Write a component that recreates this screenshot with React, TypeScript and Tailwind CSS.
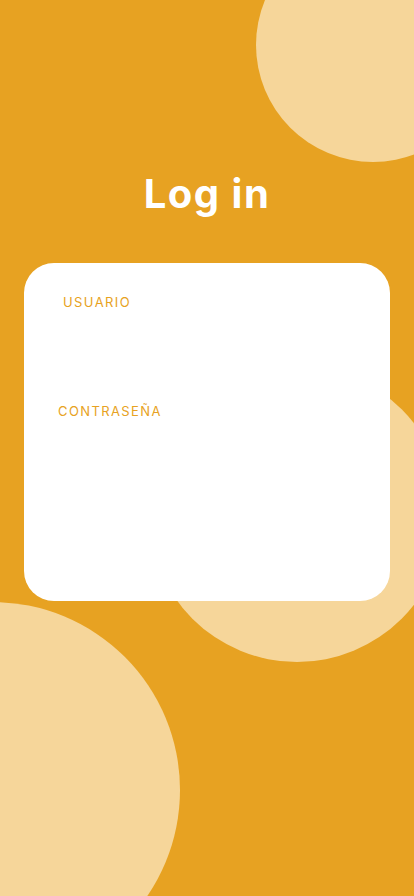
import React from "react";

function Field({ label, className }: { label: string; className: string }) {
  return (
    <div className={className}>
      <label className="block text-[13px] leading-[16px] tracking-[1.4px] text-[#E7A222] font-['Inter',sans-serif]">
        {label}
      </label>
      <input className="mt-2 w-full h-[40px] bg-transparent outline-none" type="text" />
    </div>
  );
}

export default function App() {
  return (
    <div className="relative w-[414px] h-[896px] overflow-hidden bg-[#E7A222] font-['Inter',sans-serif]">
      {/* background bubbles */}
      <div className="absolute left-[256px] top-[-72px] w-[234px] h-[234px] rounded-full bg-[#F6D69A]"></div>
      <div className="absolute left-[149px] top-[366px] w-[296px] h-[296px] rounded-full bg-[#F6D69A]"></div>
      <div className="absolute left-[-196px] top-[602px] w-[376px] h-[376px] rounded-full bg-[#F6D69A]"></div>

      <div className="relative flex flex-col items-center">
        <h1 className="mt-[168px] h-[52px] text-[40px] leading-[52px] font-bold text-white tracking-[1.5px]">
          Log in
        </h1>
        <div className="mt-[43px] w-[366px] h-[338px] bg-white rounded-[30px] pt-[31px]">
          <Field label="USUARIO" className="pl-[39px] pr-[30px]" />
          <Field label="CONTRASEÑA" className="mt-[45px] pl-[34px] pr-[30px]" />
        </div>
      </div>
    </div>
  );
}
